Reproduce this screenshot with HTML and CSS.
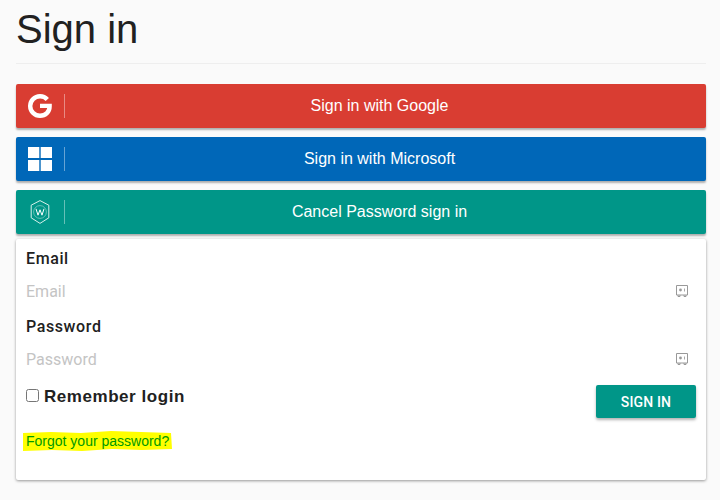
FILE: index.html
```html
<!DOCTYPE html>
<html lang="en">
<head>
    <meta charset="UTF-8">
    <title>Sign in</title>
    <link rel="stylesheet" href="styles.css">
</head>
<body>
    <div class="container">
        <h1>Sign in</h1>
        <hr class="rule">

        <a class="provider-btn google-btn" href="#">
            <span class="provider-icon">
                <svg width="24" height="24" viewBox="0 0 24 24"><path fill="none" stroke="#fff" stroke-width="4.4" d="M19.300 5.400A9.800 9.800 0 0 0 12 2.200 9.800 9.800 0 1 0 12 21.800c5.600 0 9.600-3.900 9.600-9.300v-.6H12"/></svg>
            </span>
            <span class="provider-text">Sign in with Google</span>
        </a>
        <a class="provider-btn microsoft-btn" href="#">
            <span class="provider-icon">
                <svg width="24" height="24" viewBox="0 0 24 24"><path fill="#fff" d="M0 0h11.300v11H0zM12.700 0H24v11H12.700zM0 13h11.300v11H0zM12.700 13H24v11H12.700z"/></svg>
            </span>
            <span class="provider-text">Sign in with Microsoft</span>
        </a>
        <a class="provider-btn cancel-btn" href="#">
            <span class="provider-icon">
                <svg width="24" height="24" viewBox="0 0 24 24"><path fill="none" stroke="#d5f0ea" stroke-width="1" stroke-linejoin="round" d="M12 .6l8.800 4.600v12.600L12 23.400l-8.800-5.600V5.200z"/><circle cx="12" cy="12" r="6.400" fill="none" stroke="#8fd0c6" stroke-width=".7"/><path fill="none" stroke="#fff" stroke-width="1" d="M8 8.800l2 6.400 2-5.400 2 5.400 2-6.400"/></svg>
            </span>
            <span class="provider-text">Cancel Password sign in</span>
        </a>

        <form class="login-card">
            <div class="form-group">
                <label for="email">Email</label>
                <div class="input-row">
                    <input type="text" id="email" placeholder="Email">
                    <svg class="safe-icon" width="14" height="14" viewBox="0 0 14 14"><path fill="none" stroke="#999" d="M1.500 1.500h11v9.500h-11zM3 11v1.500h2V11M9 11v1.500h2V11"/><circle cx="5.500" cy="6" r="1.400" fill="#999"/><path stroke="#aaa" d="M9.500 4.500v3"/></svg>
                </div>
            </div>
            <div class="form-group">
                <label for="password">Password</label>
                <div class="input-row">
                    <input type="password" id="password" placeholder="Password">
                    <svg class="safe-icon" width="14" height="14" viewBox="0 0 14 14"><path fill="none" stroke="#999" d="M1.500 1.500h11v9.500h-11zM3 11v1.500h2V11M9 11v1.500h2V11"/><circle cx="5.500" cy="6" r="1.400" fill="#999"/><path stroke="#aaa" d="M9.500 4.500v3"/></svg>
                </div>
            </div>
            <div class="actions">
                <label class="remember"><input type="checkbox"> <span class="remember-text">Remember login</span></label>
                <button type="button" class="signin-btn">SIGN IN</button>
            </div>
            <a class="forgot" href="#">
                <svg class="marker" width="152" height="22" viewBox="0 0 152 22"><path fill="#ff0" d="M2 3l28-1 30 1 30-2 30 1 30 1 1 16-30 1-30-1-30 2-30-1-29 1z"/></svg>
                <span class="forgot-text">Forgot your password?</span>
            </a>
        </form>
    </div>
</body>
</html>
```

FILE: styles.css
```css
body {
    font-family: "Liberation Sans", Arial, sans-serif;
    background-color: #fafafa;
    color: #212121;
    margin: 0;
}
.container {
    padding: 0 14px 0 16px;
    height: 500px;
    box-sizing: border-box;
    overflow: hidden;
}
h1 {
    font-size: 40px;
    font-weight: 400;
    line-height: 46px;
    margin: 0;
    padding-top: 6px;
}
.rule {
    border: none;
    border-top: 1px solid #eee;
    margin: 11px 0 20px;
}
.provider-btn {
    display: flex;
    align-items: center;
    height: 44px;
    margin-bottom: 9px;
    border-radius: 2px;
    color: #fff;
    text-decoration: none;
    font-size: 16px;
    box-shadow: 0 2px 2px rgba(0,0,0,0.3);
}
.provider-icon {
    display: flex;
    align-items: center;
    justify-content: center;
    width: 48px;
    height: 24px;
    border-right: 1px solid rgba(255,255,255,0.4);
    flex: none;
}
.provider-text {
    flex: 1;
    text-align: center;
    padding-right: 12px;
}
.google-btn {
    background: #d93d32;
}
.microsoft-btn {
    background: #0067b8;
}
.cancel-btn {
    background: #009688;
    margin-bottom: 5px;
}
.login-card {
    background: white;
    border-radius: 2px;
    box-shadow: 0 1px 3px rgba(0,0,0,0.4);
    height: 241px;
    padding: 10px 10px 0;
    box-sizing: border-box;
}
.form-group {
    height: 68px;
}
.form-group label {
    display: block;
    font-family: Roboto, sans-serif;
    font-weight: 500;
    font-size: 16px;
    line-height: 19px;
    letter-spacing: 0.6px;
}
.input-row {
    display: flex;
    align-items: center;
    height: 34px;
    margin-top: 6px;
}
.input-row input {
    flex: 1;
    border: none;
    outline: none;
    background: none;
    padding: 0;
    font-family: Roboto, sans-serif;
    font-size: 16px;
}
.input-row input::placeholder {
    color: #c4c4c4;
}
.safe-icon {
    margin-right: 7px;
}
.actions {
    display: flex;
    justify-content: space-between;
    align-items: flex-start;
}
.remember {
    display: flex;
    align-items: center;
    font-weight: 700;
    font-size: 17px;
    line-height: 20px;
    letter-spacing: 0.55px;
    gap: 5px;
}
.remember input {
    margin: 0 0 2px;
    width: 13px;
    height: 13px;
}
.remember-text {
    padding-top: 2px;
}
.signin-btn {
    width: 100px;
    height: 33px;
    border: none;
    border-radius: 2px;
    background: #009688;
    color: white;
    font-family: Roboto, sans-serif;
    font-weight: 500;
    font-size: 14px;
    letter-spacing: 0.15px;
    box-shadow: 0 2px 3px rgba(0,0,0,0.3);
}
.forgot {
    display: block;
    position: relative;
    width: 144px;
    margin-top: 15px;
    font-size: 14px;
    line-height: 16px;
    color: #090;
    text-decoration: none;
}
.marker {
    position: absolute;
    left: -5px;
    top: -3px;
}
.forgot-text {
    position: relative;
}
```
